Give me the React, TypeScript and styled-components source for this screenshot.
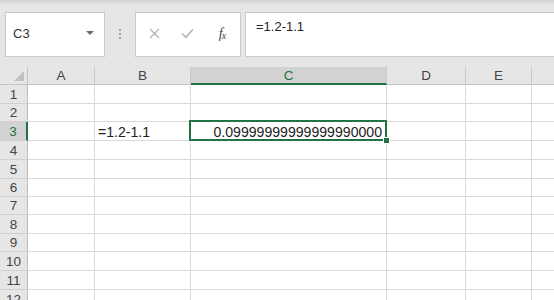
import React, { FC } from "react";
import styled, { createGlobalStyle } from "styled-components";

const GlobalStyle = createGlobalStyle`
  html, body {
    margin: 0;
    padding: 0;
    background: #e6e6e6;
    font-family: "Liberation Sans", Arial, sans-serif;
    overflow: hidden;
  }
`;

const GREEN = "#217346";
const GRID = "#d9d9d9";

const columns = [
  { key: "A", width: 67 },
  { key: "B", width: 96 },
  { key: "C", width: 196 },
  { key: "D", width: 79 },
  { key: "E", width: 66 },
  { key: "F", width: 80 },
];

const rowHeights = [19, 18, 19, 19, 19, 18, 18, 19, 18, 19, 19, 19];

const cells: Record<string, { text: string; align: "left" | "right" }> = {
  B3: { text: "=1.2-1.1", align: "left" },
  C3: { text: "0.09999999999999990000", align: "right" },
};

const Window = styled.div`
  width: 554px;
  height: 300px;
  overflow: hidden;
  display: flex;
  flex-direction: column;
`;

const FormulaBar = styled.div`
  display: flex;
  align-items: stretch;
  height: 45px;
  padding: 12px 0 10px 5px;
  background: linear-gradient(#d3d3d3 0, #dedede 3px, #e6e6e6 6px);
`;

const Box = styled.div`
  background: #fff;
  border: 1px solid #cacaca;
  box-sizing: border-box;
`;

const NameBox = styled(Box)`
  width: 100px;
  display: flex;
  align-items: center;
  justify-content: space-between;
  padding: 0 10px 2px 7px;
  font-size: 13px;
  color: #333;
`;

const Caret = styled.span`
  width: 0;
  height: 0;
  border-left: 4px solid transparent;
  border-right: 4px solid transparent;
  border-top: 4px solid #6b6b6b;
  margin-top: -2px;
`;

const Grip = styled.div`
  width: 30px;
  display: flex;
  flex-direction: column;
  align-items: center;
  justify-content: center;
  gap: 2px;
  padding-bottom: 2px;

  span {
    width: 2px;
    height: 2px;
    background: #a8a8a8;
  }
`;

const ButtonBox = styled(Box)`
  width: 106px;
  display: flex;
  align-items: center;
  padding: 0 0 2px 2px;
`;

const IconButton = styled.span`
  width: 33px;
  height: 20px;
  display: flex;
  align-items: center;
  justify-content: center;
`;

const Fx = styled.span`
  font-family: "Liberation Serif", "Times New Roman", serif;
  font-style: italic;
  font-size: 14px;
  color: #444;
  letter-spacing: -1px;
  margin-left: 3px;

  sub {
    font-size: 10px;
    vertical-align: -1px;
  }
`;

const FormulaInput = styled(Box)`
  flex: 1;
  margin-left: 4px;
  margin-right: -4px;
  padding: 6px 10px;
  font-size: 13px;
  color: #222;
`;

const Sheet = styled.div<{ $rows: string }>`
  flex: 1;
  display: grid;
  grid-template-columns: 28px ${columns.map((c) => `${c.width}px`).join(" ")};
  grid-template-rows: ${(p) => p.$rows};
  background: #fff;
  overflow: hidden;
`;

const Corner = styled.div`
  background: #e6e6e6;
  border-right: 1px solid #c4c4c4;
  border-bottom: 1px solid #c4c4c4;
  position: relative;

  &::after {
    content: "";
    position: absolute;
    right: 3px;
    bottom: 3px;
    width: 0;
    height: 0;
    border-left: 10px solid transparent;
    border-bottom: 10px solid #c0c0c0;
  }
`;

const ColHead = styled.div<{ $selected?: boolean }>`
  background: ${(p) => (p.$selected ? "#d2d2d2" : "#e6e6e6")};
  border-right: 1px solid #c8c8c8;
  border-bottom: ${(p) => (p.$selected ? `2px solid ${GREEN}` : "1px solid #c4c4c4")};
  display: flex;
  align-items: center;
  justify-content: center;
  font-size: 13.5px;
  color: ${(p) => (p.$selected ? GREEN : "#444")};
  padding-top: ${(p) => (p.$selected ? "1px" : "0")};
`;

const RowHead = styled.div<{ $selected?: boolean }>`
  background: ${(p) => (p.$selected ? "#d2d2d2" : "#e6e6e6")};
  border-right: ${(p) => (p.$selected ? `2px solid ${GREEN}` : "1px solid #bdbdbd")};
  border-bottom: 1px solid #cfcfcf;
  display: flex;
  align-items: flex-end;
  justify-content: center;
  padding-bottom: 1px;
  font-size: 13.5px;
  color: ${(p) => (p.$selected ? GREEN : "#444")};
  box-sizing: border-box;
`;

const Cell = styled.div<{ $align: "left" | "right"; $active?: boolean }>`
  position: relative;
  border-right: 1px solid ${GRID};
  border-bottom: 1px solid ${GRID};
  display: flex;
  align-items: flex-end;
  justify-content: ${(p) => (p.$align === "right" ? "flex-end" : "flex-start")};
  padding: 0 4px 0 3px;
  font-size: 14.1px;
  color: #222;
  white-space: nowrap;
  min-width: 0;

  &::after {
    content: "";
    display: ${(p) => (p.$active ? "block" : "none")};
    position: absolute;
    left: -2px;
    top: -2px;
    right: -1px;
    bottom: -1px;
    border: 2px solid ${GREEN};
  }
`;

const FillHandle = styled.span`
  position: absolute;
  right: -4px;
  bottom: -4px;
  width: 5px;
  height: 5px;
  background: ${GREEN};
  border: 1px solid #fff;
  z-index: 2;
`;

const App: FC = () => {
  const rows = ["18px", ...rowHeights.map((h) => `${h}px`)].join(" ");
  return (
    <Window>
      <GlobalStyle />
      <FormulaBar>
        <NameBox>
          C3
          <Caret />
        </NameBox>
        <Grip>
          <span />
          <span />
          <span />
        </Grip>
        <ButtonBox>
          <IconButton>
            <svg width="11" height="11" viewBox="0 0 11 11">
              <path d="M1 1L10 10M10 1L1 10" stroke="#b4b4b4" strokeWidth="1.3" fill="none" />
            </svg>
          </IconButton>
          <IconButton>
            <svg width="13" height="11" viewBox="0 0 13 11">
              <path d="M1 5.5L4.8 9.3L12 1.5" stroke="#b4b4b4" strokeWidth="1.6" fill="none" />
            </svg>
          </IconButton>
          <IconButton>
            <Fx>
              f<sub>x</sub>
            </Fx>
          </IconButton>
        </ButtonBox>
        <FormulaInput>=1.2-1.1</FormulaInput>
      </FormulaBar>
      <Sheet $rows={rows}>
        <Corner />
        {columns.map((c) => (
          <ColHead key={c.key} $selected={c.key === "C"}>
            {c.key === "F" ? "" : c.key}
          </ColHead>
        ))}
        {rowHeights.map((_, i) => {
          const r = i + 1;
          return (
            <React.Fragment key={r}>
              <RowHead $selected={r === 3}>{r}</RowHead>
              {columns.map((c) => {
                const id = `${c.key}${r}`;
                const data = cells[id];
                const active = id === "C3";
                return (
                  <Cell key={id} $align={data ? data.align : "left"} $active={active}>
                    {data ? data.text : ""}
                    {active && <FillHandle />}
                  </Cell>
                );
              })}
            </React.Fragment>
          );
        })}
      </Sheet>
    </Window>
  );
};

export default App;
